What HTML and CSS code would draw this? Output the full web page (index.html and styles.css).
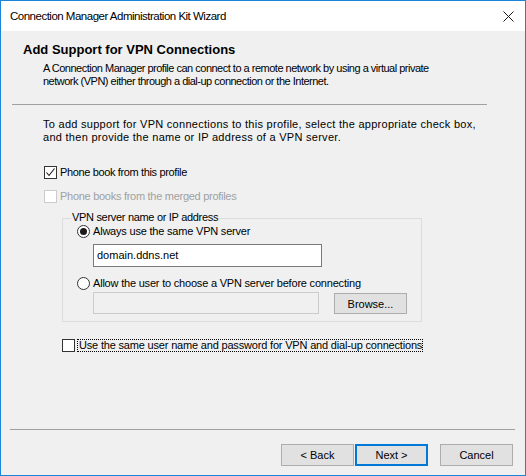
FILE: index.html
```html
<!DOCTYPE html>
<html>
<head>
<meta charset="utf-8">
<link rel="stylesheet" href="styles.css">
</head>
<body>
<div class="window">
  <div class="titlebar">
    <span class="title">Connection Manager Administration Kit Wizard</span>
    <svg class="close" width="11" height="11" viewBox="0 0 11 11"><path d="M0.5 0.5 L10.5 10.5 M10.5 0.5 L0.5 10.5" stroke="#1a1a1a" stroke-width="1" fill="none"/></svg>
  </div>
  <div class="main">
    <div class="heading">Add Support for VPN Connections</div>
    <div class="desc">A Connection Manager profile can connect to a remote network by using a virtual private<br>network (VPN) either through a dial-up connection or the Internet.</div>
    <div class="sep"></div>
    <div class="para">To add support for VPN connections to this profile, select the appropriate check box,<br>and then provide the name or IP address of a VPN server.</div>
    <div class="row cb1">
      <span class="box checked"><svg width="11" height="11" viewBox="0 0 11 11"><path d="M1.5 5.5 L4 8.5 L9.5 1.5" stroke="#1a1a1a" stroke-width="1.1" fill="none"/></svg></span>
      <span class="label">Phone book from this profile</span>
    </div>
    <div class="row cb2 disabled">
      <span class="box"></span>
      <span class="label">Phone books from the merged profiles</span>
    </div>
    <div class="group">
      <span class="legend">VPN server name or IP address</span>
      <div class="row radio-row">
        <span class="radio on"><span class="dot"></span></span>
        <span class="label">Always use the same VPN server</span>
      </div>
      <div class="textbox">domain.ddns.net</div>
      <div class="row radio-row r2">
        <span class="radio"></span>
        <span class="label">Allow the user to choose a VPN server before connecting</span>
      </div>
      <div class="browse-row">
        <div class="textbox off"></div>
        <div class="btn browse">Browse...</div>
      </div>
    </div>
    <div class="row cb3">
      <span class="box"></span>
      <span class="label focus">Use the same user name and password for VPN and dial-up connections</span>
    </div>
    <div class="footer">
      <div class="sep2"></div>
      <div class="buttons">
        <div class="btn">&lt; Back</div>
        <div class="btn default">Next &gt;</div>
        <div class="btn cancel">Cancel</div>
      </div>
    </div>
  </div>
</div>
</body>
</html>
```
FILE: styles.css
```css
* { box-sizing: border-box; }
html, body { margin: 0; padding: 0; background: #f0f0f0; }
body { font-family: "Liberation Sans", Arial, sans-serif; font-size: 11px; color: #000; }
.window {
  width: 526px; height: 476px;
  border: 1px solid #1b84d8;
  background: #f0f0f0;
  display: flex; flex-direction: column;
}
.titlebar {
  height: 30px; background: #fff;
  display: flex; align-items: center;
  padding-left: 9px; padding-right: 11px;
}
.title { font-family: "Liberation Sans", Arial, sans-serif; font-size: 11.5px; letter-spacing: -0.5px; flex: 1; color: #000; }
.close { display: block; }
.main { flex: 1; display: flex; flex-direction: column; }
.heading { margin: 11px 0 0 22px; font-size: 13px; font-weight: bold; line-height: 16px; }
.desc { margin: 4px 0 0 42px; line-height: 13px; letter-spacing: -0.5px; }
.sep { margin: 16px 0 0 11px; width: 475px; border-top: 1px solid #a0a0a0; }
.para { margin: 13px 0 0 42px; line-height: 13px; letter-spacing: 0.28px; }
.row { display: flex; align-items: center; height: 13px; line-height: 13px; }
.box {
  width: 13px; height: 13px; border: 1px solid #333; background: #fff;
  display: flex; align-items: center; justify-content: center; flex: none;
}
.label { margin-left: 3px; white-space: nowrap; letter-spacing: -0.25px; }
.cb1 { margin: 22px 0 0 43px; }
.cb1 .label { letter-spacing: -0.36px; }
.cb2 { margin: 11px 0 0 43px; }
.cb2 .label { letter-spacing: -0.28px; }
.disabled .box { border-color: #cccccc; }
.disabled .label { color: #a0a0a0; }
.group {
  position: relative;
  margin: 15px 0 0 61px; width: 360px;
  border: 1px solid #dcdcdc;
  padding: 6px 0 7px 14px;
}
.legend {
  position: absolute; top: -8px; left: 8px;
  background: #f0f0f0; padding: 0 1px; line-height: 13px; letter-spacing: -0.31px;
}
.radio {
  width: 13px; height: 13px; border: 1px solid #333; border-radius: 50%; background: #fff;
  display: flex; align-items: center; justify-content: center; flex: none;
}
.radio-row .label { letter-spacing: -0.2px; }
.radio .dot { width: 7px; height: 7px; border-radius: 50%; background: #1a1a1a; }
.textbox {
  margin: 6px 0 0 16px; width: 229px; height: 23px;
  border: 1px solid #7a7a7a; background: #fff;
  padding-left: 3px; line-height: 21px;
}
.r2 { margin-top: 10px; }
.browse-row { display: flex; align-items: flex-start; margin: 2px 0 0 16px; }
.textbox.off { margin: 0; width: 226px; height: 22px; border-color: #cccccc; background: #f0f0f0; }
.btn {
  width: 73px; height: 22px; border: 1px solid #adadad; background: #e1e1e1;
  display: flex; align-items: center; justify-content: center;
}
.browse { margin: 1px 0 0 15px; height: 21px; }
.cb3 { margin: 17px 0 0 61px; }
.cb3 .label { margin-left: 2px; border: 1px dotted #000; padding: 0 0 0 1px; line-height: 11px; height: 13px; letter-spacing: -0.18px; }
.footer { margin-top: auto; padding-bottom: 9px; }
.sep2 { margin-left: 9px; width: 505px; border-top: 1px solid #a0a0a0; }
.buttons { display: flex; margin: 14px 0 0 280px; }
.default { margin-left: 1px; border: 2px solid #0078d7; }
.cancel { margin-left: 12px; }
```
